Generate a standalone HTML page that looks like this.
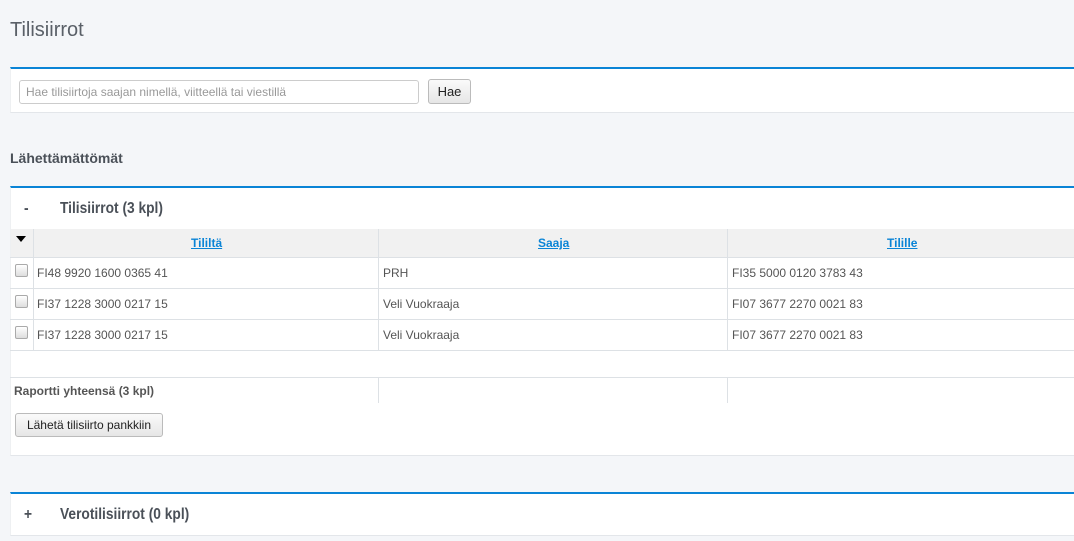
<!DOCTYPE html><html><head><style>
body{margin:0;width:1074px;height:541px;background:#f4f6f9;font-family:"Liberation Sans",sans-serif;position:relative;overflow:hidden;color:#555}
.a{position:absolute}
.panel{position:absolute;left:10px;right:0;background:#fff;border-top:2px solid #0a84d6;border-bottom:1px solid #e3e6ea;border-left:1px solid #eef0f2}
.btn{position:absolute;background:linear-gradient(#fafafa,#e6e6e6);border:1px solid #bbb;border-radius:3px;font-size:13px;color:#222;text-align:center;box-sizing:border-box}
.cb{position:absolute;left:15px;width:11px;height:11px;border:1px solid #aaa;border-radius:2px;background:linear-gradient(#fff,#ddd)}
.t{position:absolute;font-size:12px;color:#555}
.hl{position:absolute;left:10px;right:0;height:1px;background:#dde1e5}
.vl{position:absolute;width:1px;background:#dde1e5}
.th{position:absolute;font-size:12px;font-weight:bold;color:#0a84d6;text-decoration:underline;top:236px}
.h{position:absolute;font-size:16px;font-weight:bold;color:#4a5058;transform:scaleX(0.86);transform-origin:0 0}
</style></head><body>
<div class="a" style="left:10px;top:19px;font-size:20px;color:#5a6068">Tilisiirrot</div>
<div class="panel" style="top:67px;height:43px"></div>
<div class="a" style="left:19px;top:80px;width:398px;height:22px;border:1px solid #ccc;border-radius:3px;background:#fff"></div>
<div class="a" style="left:26px;top:85px;font-size:12px;color:#999">Hae tilisiirtoja saajan nimellä, viitteellä tai viestillä</div>
<div class="btn" style="left:428px;top:79px;width:43px;height:25px;line-height:23px">Hae</div>
<div class="a" style="left:10px;top:150px;font-size:14px;font-weight:bold;color:#4a5058">Lähettämättömät</div>
<div class="panel" style="top:186px;height:267px"></div>
<div class="h" style="left:24px;top:200px">-</div>
<div class="h" style="left:60px;top:200px">Tilisiirrot (3 kpl)</div>
<div class="a" style="left:11px;right:0;top:229px;height:28px;background:#f1f1f1"></div>
<div class="a" style="left:16px;top:236px;width:0;height:0;border-left:5px solid transparent;border-right:5px solid transparent;border-top:6px solid #000"></div>
<div class="vl" style="left:33px;top:229px;height:121px"></div>
<div class="vl" style="left:378px;top:229px;height:121px"></div>
<div class="vl" style="left:727px;top:229px;height:121px"></div>
<div class="vl" style="left:378px;top:378px;height:25px"></div>
<div class="vl" style="left:727px;top:378px;height:25px"></div>
<div class="th" style="left:191px">Tililtä</div>
<div class="th" style="left:538px">Saaja</div>
<div class="th" style="left:887px">Tilille</div>
<div class="hl" style="top:257px"></div><div class="hl" style="top:288px"></div><div class="hl" style="top:319px"></div><div class="hl" style="top:350px"></div><div class="hl" style="top:377px"></div>
<div class="cb" style="top:264px"></div><div class="cb" style="top:295px"></div><div class="cb" style="top:326px"></div>
<div class="t" style="left:37px;top:266px">FI48 9920 1600 0365 41</div><div class="t" style="left:383px;top:266px">PRH</div><div class="t" style="left:732px;top:266px">FI35 5000 0120 3783 43</div>
<div class="t" style="left:37px;top:297px">FI37 1228 3000 0217 15</div><div class="t" style="left:383px;top:297px">Veli Vuokraaja</div><div class="t" style="left:732px;top:297px">FI07 3677 2270 0021 83</div>
<div class="t" style="left:37px;top:328px">FI37 1228 3000 0217 15</div><div class="t" style="left:383px;top:328px">Veli Vuokraaja</div><div class="t" style="left:732px;top:328px">FI07 3677 2270 0021 83</div>
<div class="t" style="left:14px;top:384px;font-weight:bold;color:#555">Raportti yhteensä (3 kpl)</div>
<div class="btn" style="left:15px;top:413px;width:148px;height:24px;line-height:22px;font-size:12px">Lähetä tilisiirto pankkiin</div>
<div class="panel" style="top:492px;height:41px"></div>
<div class="h" style="left:24px;top:506px">+</div>
<div class="h" style="left:60px;top:506px">Verotilisiirrot (0 kpl)</div>
</body></html>
